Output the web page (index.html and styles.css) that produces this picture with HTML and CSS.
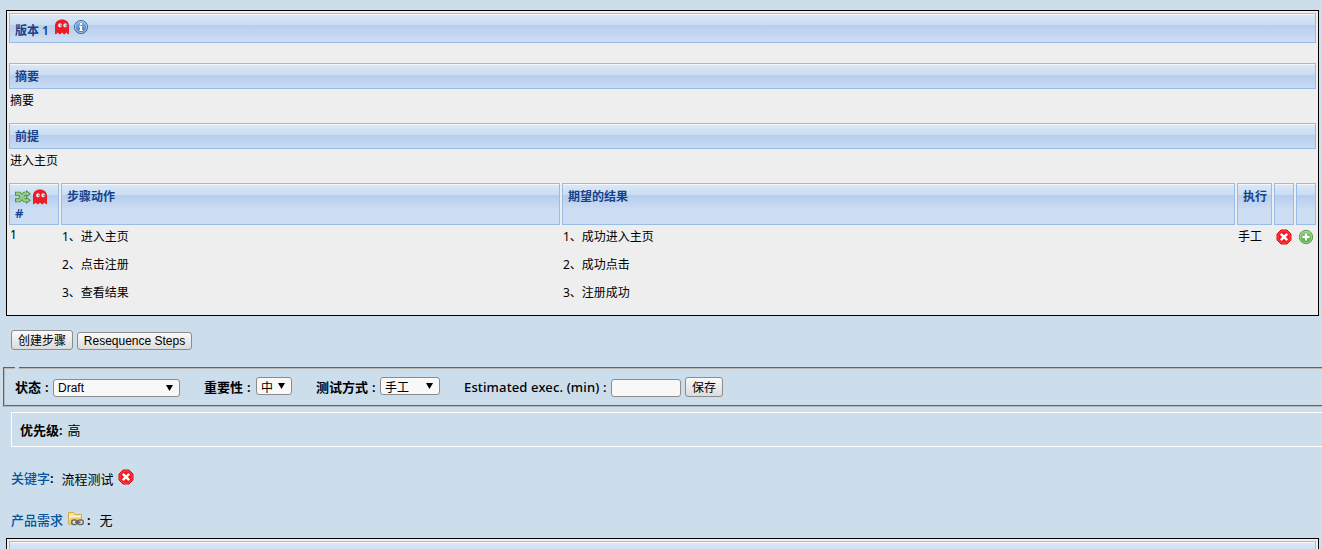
FILE: index.html
```html
<!DOCTYPE html>
<html lang="zh">
<head>
<meta charset="utf-8">
<title>版本 1</title>
<link rel="stylesheet" href="styles.css">
</head>
<body>
<svg class="defs" width="0" height="0">
  <defs>
    <linearGradient id="gInfo" x1="0" y1="0" x2="0" y2="1"><stop offset="0" stop-color="#8fb6de"/><stop offset="1" stop-color="#4579ae"/></linearGradient>
    <linearGradient id="gAdd" x1="0" y1="0" x2="0" y2="1"><stop offset="0" stop-color="#93cf80"/><stop offset="1" stop-color="#56a746"/></linearGradient>
    <symbol id="ghost" viewBox="0 0 16 16">
      <path fill="#ed1c24" d="M1 15V7C1 2.800 4 .5 8 .5S15 2.800 15 7v8l-1 .3-1.600-1.700-1.600 1.700h-1L8 13.600l-1.700 1.700h-1l-1.600-1.700L2 15.300z"/>
      <ellipse cx="6" cy="6.300" rx="1.900" ry="2.100" fill="#e9e9f2"/><ellipse cx="11.200" cy="6.300" rx="1.900" ry="2.100" fill="#e9e9f2"/>
      <circle cx="6.900" cy="6.400" r=".9" fill="#6f86b8"/><circle cx="12.100" cy="6.400" r=".9" fill="#6f86b8"/>
    </symbol>
    <symbol id="info" viewBox="0 0 16 16">
      <circle cx="8" cy="8" r="6.600" fill="url(#gInfo)" stroke="#3f6fa6"/><circle cx="8" cy="8" r="5.600" fill="none" stroke="#b9d2ec" stroke-width=".8"/>
      <path fill="#fff" d="M7 4h2v2H7zM6.300 7H9v4h.8v1H6.300v-1H7V8h-.7z"/>
    </symbol>
    <symbol id="shuffle" viewBox="0 0 16 16">
      <path fill="none" stroke="#4d9045" stroke-width="4" d="M0 4.700h4.500l5 6.600H12M0 11.300h4.500l5-6.600H12"/>
      <path fill="#4d9045" d="M11 1l5 3.700-5 3.800zM11 7.500l5 3.800-5 3.700z"/>
      <path fill="none" stroke="#9ad08d" stroke-width="2.200" d="M1 4.700h3.500l5 6.600H13M1 11.300h3.500l5-6.600H13"/>
      <path fill="#9ad08d" d="M12 3l2.500 1.700L12 6.500zM12 9.500l2.500 1.800L12 13z"/>
    </symbol>
    <symbol id="del" viewBox="0 0 16 16">
      <path fill="#f5161f" stroke="#d80a12" d="M5 1h6l4 4v6l-4 4H5l-4-4V5z"/>
      <path fill="none" stroke="#ff7070" stroke-width=".6" d="M5.400 2h5.200L14 5.400v5.200L10.600 14H5.400L2 10.600V5.400z"/>
      <path stroke="#fff" stroke-width="2.500" d="M4.800 4.800l6.400 6.400M11.200 4.800l-6.400 6.400"/>
    </symbol>
    <symbol id="add" viewBox="0 0 16 16">
      <circle cx="8" cy="8" r="6.700" fill="url(#gAdd)" stroke="#569a4b"/><circle cx="8" cy="8" r="5.800" fill="none" stroke="#b5deaa" stroke-width=".7"/>
      <path fill="#fff" d="M7 4.500h2V7h2.500v2H9v2.500H7V9H4.500V7H7z"/>
    </symbol>
    <symbol id="folder" viewBox="0 0 16 16">
      <path fill="#fbe58f" stroke="#d8a94b" d="M.5 13V1.500h5l1.500 2h6.500V13z"/>
      <path fill="#fff6cd" d="M2 5h10.500v1.500H2z"/>
      <path fill="#f4d780" stroke="#dcb45d" stroke-width=".6" d="M1 13l2-6h10.500v6z"/>
      <g fill="#e4e4e4" stroke="#696969" stroke-width="1.500"><rect x="3.700" y="9" width="5.500" height="4.500" rx="2"/><rect x="9.800" y="9" width="5.500" height="4.500" rx="2"/></g>
      <path stroke="#555" stroke-width="1.400" d="M7 11.200h5.500"/>
    </symbol>
  </defs>
</svg>

<main class="panel">
  <div class="bar bar-title"><span>版本 1</span><svg class="icon ghost-title"><use href="#ghost"/></svg><svg class="icon info"><use href="#info"/></svg></div>
  <div class="bar bar-summary">摘要</div>
  <p class="body-text">摘要</p>
  <div class="bar">前提</div>
  <p class="body-text">进入主页</p>
  <div class="steps">
    <div class="head head-num"><div class="head-icons"><svg class="icon"><use href="#shuffle"/></svg><svg class="icon"><use href="#ghost"/></svg></div><span class="hash">#</span></div>
    <div class="head">步骤动作</div>
    <div class="head">期望的结果</div>
    <div class="head">执行</div>
    <div class="head"></div>
    <div class="head"></div>
    <div class="cell num">1</div>
    <div class="cell lines"><p>1、进入主页</p><p>2、点击注册</p><p>3、查看结果</p></div>
    <div class="cell lines"><p>1、成功进入主页</p><p>2、成功点击</p><p>3、注册成功</p></div>
    <div class="cell">手工</div>
    <div class="cell cell-icon"><svg class="icon"><use href="#del"/></svg></div>
    <div class="cell cell-icon"><svg class="icon"><use href="#add"/></svg></div>
  </div>
</main>

<div class="actions"><button class="btn btn-create">创建步骤</button><button class="btn btn-reseq">Resequence Steps</button></div>

<fieldset class="settings">
  <legend></legend>
  <div class="settings-row">
    <span class="label label-status">状态<b>:</b></span><div class="select low select-status">Draft<i class="arrow"></i></div>
    <span class="label label-weight">重要性<b>:</b></span><div class="select select-cjk select-weight">中<i class="arrow"></i></div>
    <span class="label label-mode">测试方式<b>:</b></span><div class="select select-cjk select-mode">手工<i class="arrow"></i></div>
    <span class="label label-time">Estimated exec. (min) :</span><input class="field low" type="text"><button class="btn btn-save">保存</button>
  </div>
</fieldset>

<div class="priority"><b>优先级:</b><span>高</span></div>

<div class="meta keywords"><b>关键字</b><b class="colon">:</b><span class="keyword">流程测试</span><svg class="icon"><use href="#del"/></svg></div>
<div class="meta needs"><b>产品需求</b><svg class="icon"><use href="#folder"/></svg><b class="colon">:</b><span class="none">无</span></div>

<section class="panel panel-next"><div class="bar"></div></section>
</body>
</html>
```
FILE: styles.css
```css
* { box-sizing: border-box; }
html { height: 549px; overflow: hidden; }
body {
  display: flow-root;
  height: 549px;
  overflow: hidden;
  margin: 0;
  padding-top: 10px;
  background: #ccddec;
  color: #000;
  font: 12px/16px "Noto Sans", "Noto Sans CJK SC", sans-serif;
  white-space: nowrap;
}
p { margin: 0; }
.defs { display: block; width: 0; height: 0; }
.icon { display: block; flex: none; width: 16px; height: 16px; }

.panel {
  width: 1313px;
  height: 306px;
  margin-left: 6px;
  padding: 2px;
  border: 1px solid #000;
  background: #eee;
}
.bar, .head {
  border: 1px solid #99bbe8;
  background: linear-gradient(#f4f8fd 0 1px, #dae7f6 1px, #cbddf3 11px, #b5cdec 11px, #b8cfee 13px, #cdddf3 26px);
  color: #15428b;
  font-weight: 600;
}
.bar { height: 26px; padding: 5px 5px 3px; }
.bar-title { display: flex; height: 30px; padding-top: 9px; }
.ghost-title { margin: -4px 0 0 5px; }
.info { margin: -4px 0 0 3px; }
.bar-summary { margin-top: 20px; }
.body-text { height: 34px; padding: 4px 1px; }

.steps { display: grid; grid-template: 42px 88px / 50px 499px 673px 35px 20px 20px; column-gap: 2px; }
.head { padding: 5px; }
.head-num { line-height: 14px; }
.hash { font-size: 13px; }
.head-icons { display: flex; gap: 1px; margin-bottom: 2px; height: 15px; }
.cell { padding: 4px 1px; }
.num { padding-top: 2px; }
.lines p { height: 28px; }
.cell-icon { padding: 4px 2px; }

.btn {
  padding: 0;
  border: 1px solid #8c8c8c;
  border-radius: 3px;
  background: linear-gradient(#fafafa, #dcdcdc);
  color: #000;
  font: 12px/16px "Liberation Sans", "Noto Sans CJK SC", sans-serif;
}
.actions { display: flex; align-items: flex-end; gap: 4px; height: 34px; padding-left: 11px; }
.btn-create { width: 62px; height: 20px; padding-top: 2px; }
.btn-reseq { width: 115px; height: 18px; }

.settings {
  width: 1340px;
  height: 40px;
  margin: 17px 0 0 3px;
  padding: 0 0 0 10px;
  border: 2px groove #b8b8b8;
}
.settings legend { width: 4px; height: 2px; padding: 0; }
.settings-row { display: flex; align-items: flex-start; padding-top: 8px; }
.label { padding-top: 1px; font-size: 13px; font-weight: 600; line-height: 19px; }
.label b { margin-left: 4px; font-weight: 600; }
.label-status { width: 38px; }
.label-weight { width: 52px; margin-left: 24px; }
.label-mode { width: 64px; margin-left: 24px; }
.label-time { width: 147px; margin-left: 24px; font-weight: 500; letter-spacing: .14px; }
.select {
  display: flex;
  justify-content: space-between;
  align-items: center;
  height: 18px;
  padding: 0 6px 0 4px;
  border: 1px solid #8c8c8c;
  border-radius: 3px;
  background: #f8f8f8;
  font: 12px/18px "Liberation Sans", "Noto Sans CJK SC", sans-serif;
}
.select-cjk { padding-top: 4px; }
.select-cjk .arrow { margin-top: -4px; }
.low { margin-top: 2px; }
.select-status { width: 127px; }
.select-weight { width: 36px; }
.select-mode { width: 60px; }
.arrow { width: 7px; height: 6px; background: #000; clip-path: polygon(0 0, 100% 0, 50% 100%); }
.field { width: 70px; height: 18px; padding: 0; border: 1px solid #8c8c8c; border-radius: 3px; background: #f8f8f8; }
.btn-save { width: 38px; height: 20px; margin-left: 4px; padding-top: 2px; }

.priority {
  display: flex;
  gap: 5px;
  width: 1330px;
  height: 35px;
  margin: 5px 0 0 11px;
  padding: 9px 8px 7px;
  border: 1px solid #fff;
  font-size: 13px;
  line-height: 17px;
}
.priority b { font-weight: 600; }
.meta b { font-weight: 500; }
.meta { display: flex; padding-left: 11px; height: 20px; font-size: 13px; line-height: 20px; }
.meta b { color: #05559c; }
.meta .colon { color: #000; font-weight: 600; }
.keywords { margin-top: 21px; }
.keywords .icon { margin-top: 1px; }
.keyword { margin: 1px 4px 0 8px; }
.needs { margin-top: 22px; }
.needs .icon { margin: 1px 0 0 5px; }
.needs .colon { margin-left: 3px; }
.none { margin-left: 9px; }
.panel-next { height: 11px; margin-top: 8px; border-bottom: 0; padding-bottom: 0; overflow: hidden; }
.panel-next .bar { height: 8px; padding: 0; border-bottom: 0; background: linear-gradient(#f4f8fd 0 1px, #dae7f6 1px, #cfe0f4 8px); }
```
